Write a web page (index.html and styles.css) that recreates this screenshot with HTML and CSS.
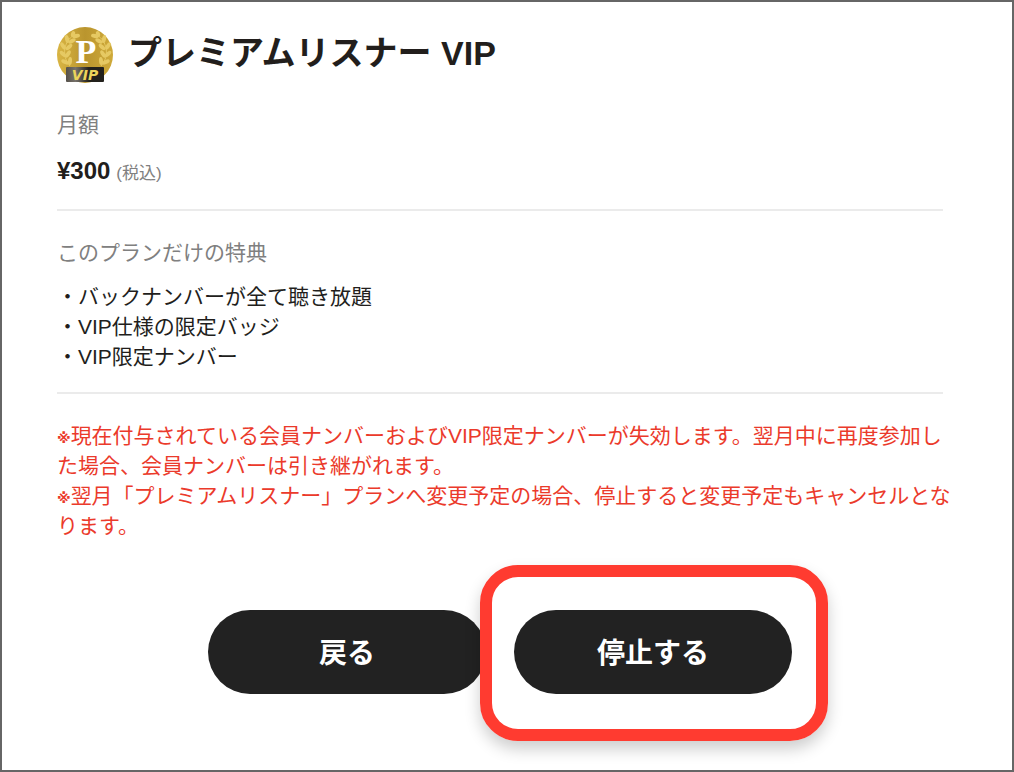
FILE: index.html
```html
<!DOCTYPE html>
<html lang="ja">
<head>
    <meta charset="UTF-8">
    <meta name="viewport" content="width=device-width, initial-scale=1.0">
    <title>プレミアムリスナー VIP</title>
    <link rel="stylesheet" href="styles.css">
</head>
<body>
    <main class="plan">
        <div class="plan-header">
            <svg class="badge" viewBox="0 0 56 56" aria-hidden="true">
                <defs>
                    <linearGradient id="gold" x1="0" y1="0" x2="1" y2="0">
                        <stop offset="0" stop-color="#d9b544"/>
                        <stop offset="0.5" stop-color="#ba952e"/>
                        <stop offset="1" stop-color="#cfaa3a"/>
                    </linearGradient>
                    <linearGradient id="plate" x1="0" y1="0" x2="1" y2="0">
                        <stop offset="0" stop-color="#55504a"/>
                        <stop offset="0.25" stop-color="#77726a"/>
                        <stop offset="0.6" stop-color="#23211c"/>
                        <stop offset="1" stop-color="#23211c"/>
                    </linearGradient>
                    <g id="laurel" fill="#e6c963">
                        <path d="M17 8C7 14 4 29 13 39" fill="none" stroke="#e6c963"/>
                        <ellipse cx="19" cy="9" rx="4" ry="2" transform="rotate(-12 19 9)"/>
                        <ellipse cx="16" cy="7" rx="2" ry="3" transform="rotate(20 16 7)"/>
                        <ellipse cx="15" cy="14" rx="4" ry="2" transform="rotate(-30 15 14)"/>
                        <ellipse cx="10" cy="12" rx="2" ry="4" transform="rotate(-12 10 12)"/>
                        <ellipse cx="12" cy="20" rx="4" ry="2" transform="rotate(-42 12 20)"/>
                        <ellipse cx="6" cy="19" rx="2" ry="4" transform="rotate(-32 6 19)"/>
                        <ellipse cx="11" cy="27" rx="4" ry="2" transform="rotate(-58 11 27)"/>
                        <ellipse cx="6" cy="27" rx="2" ry="4" transform="rotate(-48 6 27)"/>
                        <ellipse cx="13" cy="34" rx="4" ry="2" transform="rotate(-85 13 34)"/>
                        <ellipse cx="8" cy="35" rx="2" ry="4" transform="rotate(-65 8 35)"/>
                    </g>
                </defs>
                <circle cx="28" cy="28" r="28" fill="url(#gold)"/>
                <use href="#laurel"/>
                <use href="#laurel" transform="matrix(-1 0 0 1 57 0)"/>
                <text class="badge-letter" x="29" y="36">P</text>
                <rect x="9" y="40" width="38" height="15" rx="1" fill="url(#plate)"/>
                <text class="badge-name" x="28" y="53">VIP</text>
            </svg>
            <h1>プレミアムリスナー VIP</h1>
        </div>

        <h2 class="label">月額</h2>
        <p class="price"><strong>¥300</strong> <small>(税込)</small></p>

        <hr>

        <h2 class="label">このプランだけの特典</h2>
        <ul class="benefits">
            <li>・バックナンバーが全て聴き放題</li>
            <li>・VIP仕様の限定バッジ</li>
            <li>・VIP限定ナンバー</li>
        </ul>

        <hr>

        <div class="notice">
            <p><span class="mark">※</span>現在付与されている会員ナンバーおよびVIP限定ナンバーが失効します。翌月中に再度参加した場合、会員ナンバーは引き継がれます。</p>
            <p><span class="mark">※</span>翌月「プレミアムリスナー」プランへ変更予定の場合、停止すると変更予定もキャンセルとなります。</p>
        </div>

        <div class="actions">
            <button type="button">戻る</button>
            <div class="highlight">
                <button type="button">停止する</button>
            </div>
        </div>
    </main>
</body>
</html>
```

FILE: styles.css
```css
* {
    box-sizing: border-box;
}
body {
    margin: 0;
    background: #fff;
    color: #221e1c;
    font-family: "Liberation Sans", "Noto Sans CJK JP", sans-serif;
    font-size: 21px;
    line-height: 30px;
}
h1, h2, p, ul {
    margin: 0;
    padding: 0;
}
.plan {
    min-height: 100vh;
    padding: 25px 69px 28px 55px;
    border: 2px solid #666;
}
.plan-header {
    display: flex;
    align-items: center;
    gap: 15px;
    margin-bottom: 27px;
}
.plan-header h1 {
    font-size: 34px;
    line-height: 52px;
    padding-bottom: 4px;
}
.badge {
    width: 56px;
    height: 56px;
    flex: none;
}
.badge-letter {
    fill: #fff;
    font-family: "Liberation Serif", serif;
    font-size: 34px;
    font-weight: bold;
    text-anchor: middle;
}
.badge-name {
    fill: #ecd35a;
    font-family: "DejaVu Sans", sans-serif;
    font-size: 14px;
    font-style: italic;
    font-weight: bold;
    text-anchor: middle;
}
.label {
    color: #808080;
    font-size: 21px;
    font-weight: normal;
}
.price {
    margin: 17px 0 22px;
}
.price strong {
    font-size: 24px;
    line-height: 24px;
}
.price small {
    color: #808080;
    font-size: 17px;
    line-height: 17px;
}
hr {
    height: 2px;
    margin: 0 0 27px;
    border: 0;
    background: #ebebeb;
}
.benefits {
    margin: 14px 0 20px;
    list-style: none;
}
/* full-width lines run slightly past the dividers */
.notice {
    margin-right: -14px;
    color: #eb3a2b;
}
.mark {
    font-family: "DejaVu Sans", sans-serif;
    font-size: 14px;
    font-weight: bold;
    line-height: 14px;
}
.actions {
    display: flex;
    justify-content: center;
    gap: 28px;
    margin-top: 69px;
}
.actions button {
    width: 278px;
    height: 84px;
    padding: 0 0 3px;
    border: 0;
    border-radius: 42px;
    background: #222;
    color: #fff;
    font-family: inherit;
    font-size: 28px;
    font-weight: bold;
    cursor: pointer;
}
.highlight {
    position: relative;
}
.highlight::after {
    content: "";
    position: absolute;
    inset: -45px -36px -47px -34px;
    border: 12px solid #ff3b30;
    border-radius: 38px;
    box-shadow: 0 8px 16px rgba(0, 0, 0, 0.2);
    pointer-events: none;
}
```
